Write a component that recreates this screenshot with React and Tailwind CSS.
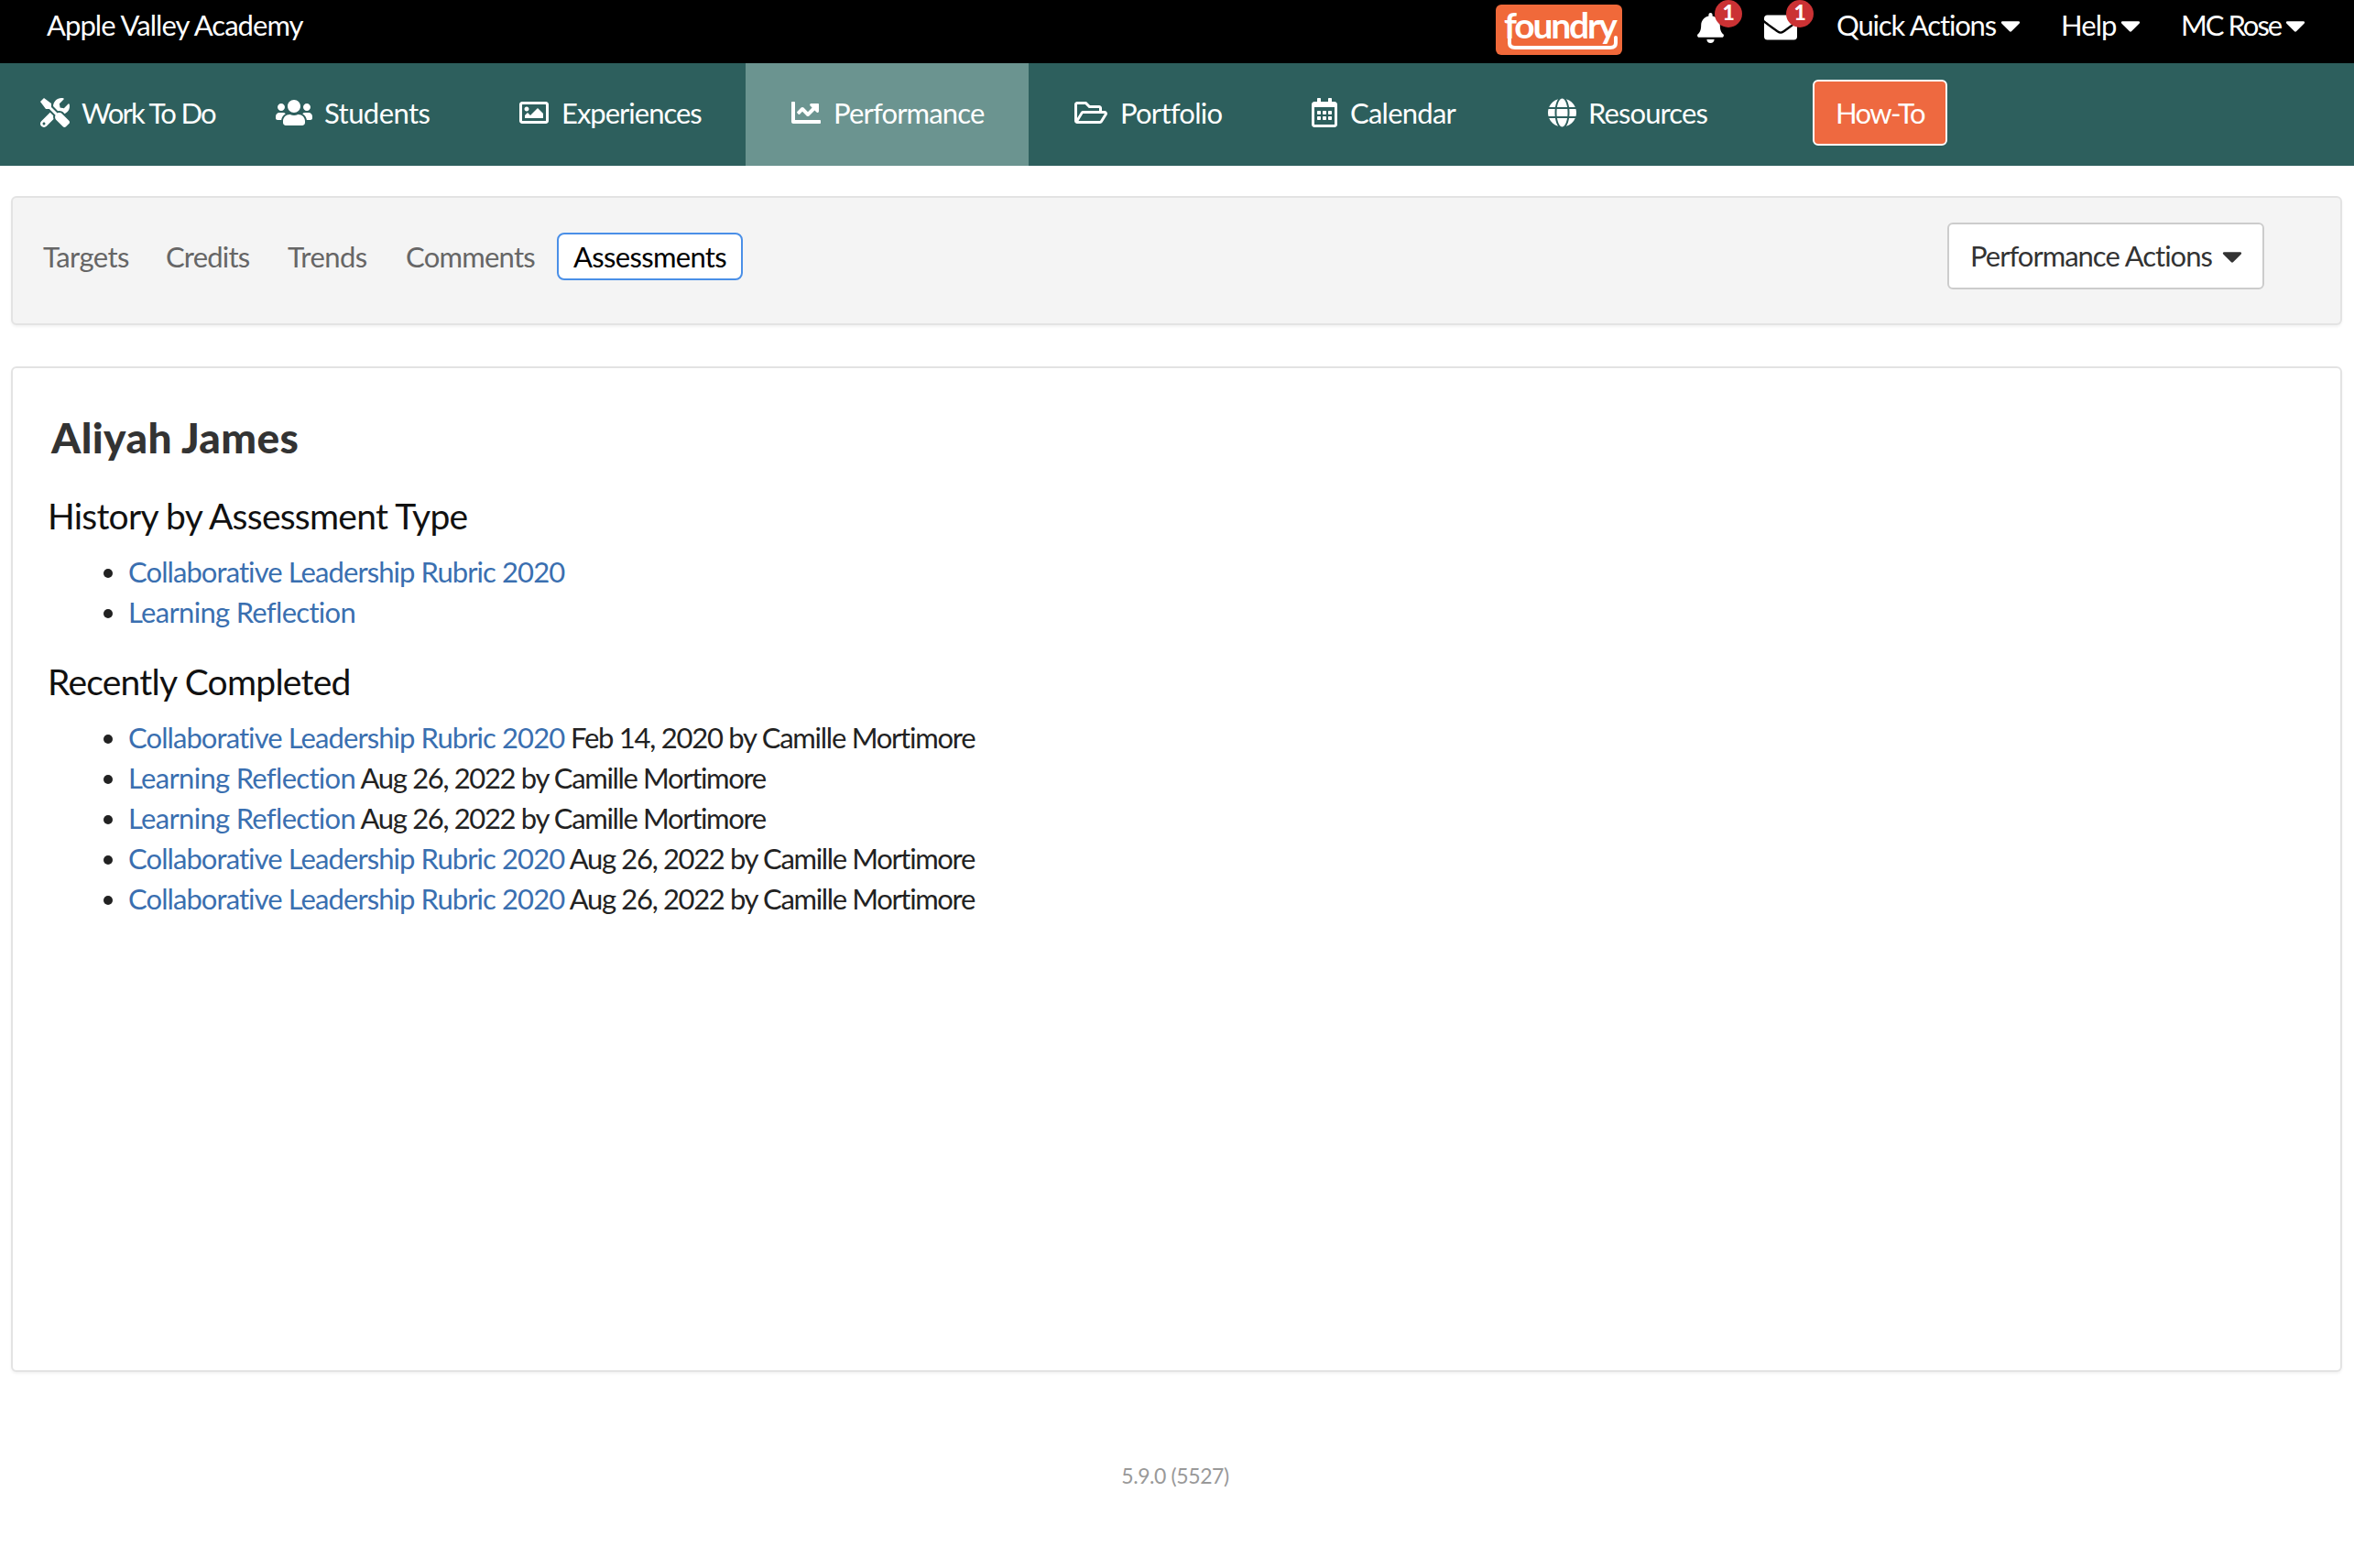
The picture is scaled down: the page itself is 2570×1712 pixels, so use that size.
import React from "react";
import { FaTools, FaUsers, FaRegImage, FaChartLine, FaRegFolderOpen, FaRegCalendarAlt, FaGlobe, FaBell, FaEnvelope, FaCaretDown } from "react-icons/fa";

const nav = [
  { label: "Work To Do", Icon: FaTools, box: "w-[252px] pl-[44px] gap-[13px]", icon: "w-[32px] h-[32px]", text: "tracking-[-1.7px]" },
  { label: "Students", Icon: FaUsers, box: "w-[266px] pl-[49px] gap-[13px]", icon: "w-[40px] h-[32px]", text: "tracking-[-0.55px]" },
  { label: "Experiences", Icon: FaRegImage, box: "w-[296px] pl-[49px] gap-[14px]", icon: "w-[32px] h-[32px]", text: "tracking-[-1px]" },
  { label: "Performance", Icon: FaChartLine, box: "w-[309px] pl-[50px] gap-[14px] bg-[#6b9490]", icon: "w-[32px] h-[32px]", text: "tracking-[-0.85px]" },
  { label: "Portfolio", Icon: FaRegFolderOpen, box: "w-[260px] pl-[50px] gap-[14px]", icon: "w-[36px] h-[32px]", text: "tracking-[-0.75px]" },
  { label: "Calendar", Icon: FaRegCalendarAlt, box: "w-[257px] pl-[49px] gap-[14px]", icon: "w-[28px] h-[32px]", text: "tracking-[-0.75px]" },
  { label: "Resources", Icon: FaGlobe, box: "w-[272px] pl-[50px] gap-[13px]", icon: "w-[31px] h-[32px]", text: "tracking-[-0.9px]" },
];

const CLR = "Collaborative Leadership Rubric 2020";
const LR = "Learning Reflection";
const history = [CLR, LR];
const recent = [
  [CLR, "Feb 14, 2020 by Camille Mortimore"],
  [LR, "Aug 26, 2022 by Camille Mortimore"],
  [LR, "Aug 26, 2022 by Camille Mortimore"],
  [CLR, "Aug 26, 2022 by Camille Mortimore"],
  [CLR, "Aug 26, 2022 by Camille Mortimore"],
];

function Doc({ title }) {
  return <a className={title === LR ? "text-[#3a6fb0] tracking-[-0.7px]" : "text-[#3a6fb0] tracking-[-0.92px]"}>{title}</a>;
}

function Badge({ cls }) {
  return (
    <span className={"absolute top-0 flex h-[30px] w-[30px] items-center justify-center rounded-full bg-[#cb3234] pb-[4px] text-[23px] font-black text-white " + cls}>1</span>
  );
}

function Menu({ label, box, text }) {
  return (
    <div className={"flex items-center justify-between whitespace-nowrap " + box}>
      <span className={text}>{label}</span>
      <FaCaretDown className="h-[35px] w-[22px] shrink-0" />
    </div>
  );
}

export default function App() {
  return (
    <div className="min-h-[1712px] bg-white font-['Lato','Noto_Sans',sans-serif] text-[31px] tracking-[-0.55px] text-[#222]">
      <header className="flex h-[69px] items-start justify-between bg-black pl-[51px] pr-[53px] text-white">
        <div className="pt-[5px] leading-[44px] tracking-[-0.95px]">Apple Valley Academy</div>
        <div className="flex items-start">
          <div className="relative mt-[5px] h-[55px] w-[138px] rounded-[6px] bg-[#f0693a] pl-[9px] text-[39px] font-bold leading-[44px] tracking-[-2.2px]">
            <span>foundry</span>
            <svg viewBox="0 0 138 55" className="absolute left-0 top-0 h-[55px] w-[138px]" fill="none" stroke="#fff" strokeWidth="4" strokeLinecap="round">
              <path d="M15 34 V42 Q15 47 21 47 H125 Q131 47 131 42 V36" />
            </svg>
          </div>
          <div className="relative ml-[82px] h-[69px] w-[49px]">
            <FaBell className="mt-[14px] h-[33px] w-[29px]" />
            <Badge cls="left-[19px]" />
          </div>
          <div className="relative ml-[24px] h-[69px] w-[54px]">
            <FaEnvelope className="mt-[12px] h-[36px] w-[36px]" />
            <Badge cls="left-[24px]" />
          </div>
          <div className="ml-[25px] flex gap-[44px] pt-[5px] leading-[44px]">
            <Menu label="Quick Actions" box="w-[201px]" text="tracking-[-1.15px]" />
            <Menu label="Help" box="w-[87px]" text="tracking-[-0.95px]" />
            <Menu label="MC Rose" box="w-[136px]" text="tracking-[-2px]" />
          </div>
        </div>
      </header>

      <nav className="flex h-[112px] items-center bg-[#2d5f5d] text-white">
        {nav.map(({ label, Icon, box, icon, text }) => (
          <a key={label} className={"flex h-full items-center pb-[4px] " + box}>
            <Icon className={icon} />
            <span className={text}>{label}</span>
          </a>
        ))}
        <a className="mb-[4px] ml-[67px] flex h-[72px] w-[147px] items-center justify-center rounded-[6px] border-2 border-white bg-[#ee6940] tracking-[-1.6px]">How-To</a>
      </nav>

      <div className="pl-[12px] pr-[13px]">
        <div className="mt-[33px] flex h-[141px] items-start justify-between rounded-[6px] border-2 border-[#e3e3e3] bg-[#f4f4f4] pt-[27px] pl-[33px] pr-[83px] shadow-[0_2px_3px_rgba(0,0,0,0.05)]">
          <div className="mt-[11px] flex items-center text-[#666]">
            <a className="w-[134px]">Targets</a>
            <a className="w-[133px] tracking-[-0.8px]">Credits</a>
            <a className="w-[129px]">Trends</a>
            <a className="w-[165px] tracking-[-0.75px]">Comments</a>
            <a className="flex h-[52px] w-[203px] items-center justify-center rounded-[8px] border-2 border-[#4a8fe7] bg-white tracking-[-0.7px] text-black">Assessments</a>
          </div>
          <button className="flex h-[73px] w-[346px] items-center gap-[11px] rounded-[6px] border-2 border-[#ccc] bg-white pl-[23px] tracking-[-1px] text-[#333]">
            <span>Performance Actions</span>
            <FaCaretDown className="h-[35px] w-[22px]" />
          </button>
        </div>

        <main className="mt-[45px] h-[1098px] rounded-[6px] border-2 border-[#e3e3e3] bg-white pl-[38px] shadow-[0_2px_3px_rgba(0,0,0,0.05)]">
          <h1 className="pl-[4px] pt-[48px] text-[46px] font-black leading-[56px] tracking-[0.4px] text-[#333]">Aliyah James</h1>
          <h2 className="mt-[29px] text-[39px] leading-[56px] tracking-[-0.75px] text-[#111]">History by Assessment Type</h2>
          <ul className="mt-[11px] list-disc pl-[88px] leading-[44px]">
            {history.map((h) => (
              <li key={h}><Doc title={h} /></li>
            ))}
          </ul>
          <h2 className="mt-[26px] text-[39px] leading-[56px] tracking-[-0.75px] text-[#111]">Recently Completed</h2>
          <ul className="mt-[11px] list-disc pl-[88px] leading-[44px]">
            {recent.map(([a, b], i) => (
              <li key={i} className={i === 0 ? "tracking-[-1.25px]" : "tracking-[-1.35px]"}><Doc title={a} /> {b}</li>
            ))}
          </ul>
        </main>
      </div>

      <footer className="mt-[98px] pr-[4px] text-center text-[23px] leading-[30px] tracking-[-0.4px] text-[#999]">5.9.0 (5527)</footer>
    </div>
  );
}
